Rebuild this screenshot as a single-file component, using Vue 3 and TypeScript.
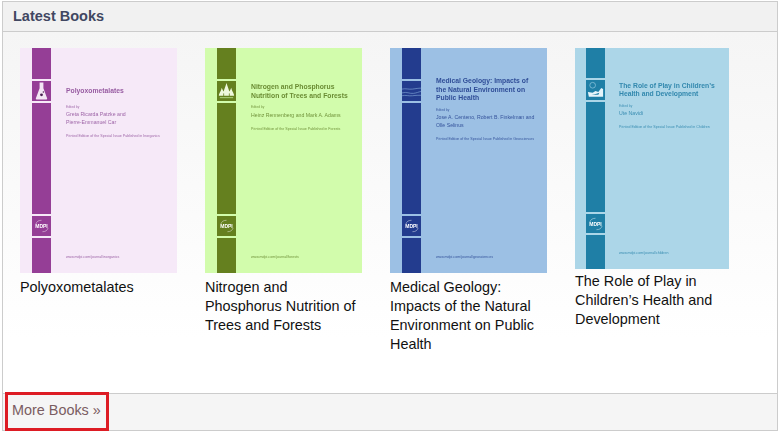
<script setup lang="ts">
interface Book {
  name: string
  title: string[]
  editors: string[]
  journal: string
  url: string
  kind: 'flask' | 'trees' | 'waves' | 'play'
  paper: string
  strip: string
  ink: string
  top: number
  byGap: number
  small?: boolean
}

const books: Book[] = [
  {
    name: 'Polyoxometalates',
    title: ['Polyoxometalates'],
    editors: ['Greta Ricarda Patzke and', 'Pierre-Emmanuel Car'],
    journal: 'Inorganics',
    url: 'www.mdpi.com/journal/inorganics',
    kind: 'flask',
    paper: '#f6e9f8',
    strip: '#953e96',
    ink: '#8d4c98',
    top: 39,
    byGap: 9,
  },
  {
    name: 'Nitrogen and Phosphorus Nutrition of Trees and Forests',
    title: ['Nitrogen and Phosphorus', 'Nutrition of Trees and Forests'],
    editors: ['Heinz Rennenberg and Mark A. Adams'],
    journal: 'Forests',
    url: 'www.mdpi.com/journal/forests',
    kind: 'trees',
    paper: '#d2fcac',
    strip: '#65801f',
    ink: '#5f7f26',
    top: 35,
    byGap: 5,
  },
  {
    name: 'Medical Geology: Impacts of the Natural Environment on Public Health',
    title: ['Medical Geology: Impacts of', 'the Natural Environment on', 'Public Health'],
    editors: ['Jose A. Centeno, Robert B. Finkelman and', 'Olle Selinus'],
    journal: 'Geosciences',
    url: 'www.mdpi.com/journal/geosciences',
    kind: 'waves',
    paper: '#9cc0e4',
    strip: '#233c8e',
    ink: '#24418f',
    top: 29,
    byGap: 5,
  },
  {
    name: 'The Role of Play in Children\u2019s Health and Development',
    title: ['The Role of Play in Children\u2019s', 'Health and Development'],
    editors: ['Ute Navidi'],
    journal: 'Children',
    url: 'www.mdpi.com/journal/children',
    kind: 'play',
    paper: '#acd6e8',
    strip: '#1f7fa6',
    ink: '#2680a8',
    top: 33.5,
    byGap: 5,
    small: true,
  },
]
</script>

<template>
  <section class="panel">
    <header class="panel-head">Latest Books</header>

    <div class="panel-body">
      <article v-for="book in books" :key="book.name" class="book">
        <div
          class="cover"
          :class="{ small: book.small }"
          :style="{ backgroundColor: book.paper, color: book.ink }"
        >
          <div class="strip" :style="{ '--strip': book.strip }">
            <div class="seg seg-top"></div>
            <div class="seg seg-icon">
              <svg v-if="book.kind === 'flask'" viewBox="0 0 20 20" width="19" height="20">
                <path d="M8 1h4v6l4 11a1 1 0 0 1-1 1H5a1 1 0 0 1-1-1l4-11z" fill="#f3e6f4" />
                <circle cx="10" cy="14" r="1.5" fill="#4a2050" />
                <circle cx="12" cy="11" r="0.8" fill="#4a2050" />
              </svg>
              <svg v-else-if="book.kind === 'trees'" viewBox="0 0 20 20" width="19" height="20">
                <path d="M2 15C2 12 4 11 5 6.500 6 9 6.500 10 7 10.500 8 7 9 5 10 1.500 11 5 12 7 13 10.500 13.500 10 14 9 15 6.500 16 11 18 12 18 15z" fill="#eef8dc" />
                <path d="M7 15.500v-3M13 15.500v-3" stroke="#65801f" stroke-width="0.8" />
                <path d="M3 17h14" stroke="#d2fcac" stroke-width="0.7" />
              </svg>
              <svg v-else-if="book.kind === 'waves'" viewBox="0 0 20 20" width="19" height="20" fill="none" stroke="#7fa3d4" stroke-width="0.7">
                <path d="M0 8c4-1 7 .5 11 0s6-1 9-1" />
                <path d="M0 12c5-1.500 8 1 12 .5s5-1.500 8-2" />
                <path d="M0 15c4-1 7 .5 11 0s6-.5 9-.5" />
              </svg>
              <svg v-else viewBox="0 0 20 20" width="19" height="20">
                <circle cx="7" cy="5" r="3" fill="none" stroke="#8cc5dc" stroke-width="0.8" />
                <path d="M2 12l5 1 3-2 3 1 3-4 2 1v8H3z" fill="#e6f4fa" />
                <path d="M6 15h7l1-2-3 1-2 .5z" fill="#1f7fa6" />
              </svg>
            </div>
            <div class="seg seg-fill"></div>
            <div class="seg seg-logo">
              <span class="logo-text">MDPI</span>
              <svg class="logo-arc" viewBox="0 0 20 20" width="19" height="20" fill="none" stroke="#fff" stroke-width="0.6" opacity="0.75">
                <path d="M4 8c1-3 3-4 6-4" />
                <path d="M17 12c-1 3-3 4-6 4" />
              </svg>
            </div>
            <div class="seg seg-end"></div>
          </div>

          <div class="print" :style="{ paddingTop: book.top + 'px' }">
            <div class="print-title">
              <div v-for="line in book.title" :key="line">{{ line }}</div>
            </div>
            <div class="print-by" :style="{ marginTop: book.byGap + 'px' }">Edited by</div>
            <div class="print-names">
              <div v-for="line in book.editors" :key="line">{{ line }}</div>
            </div>
            <div class="print-note">Printed Edition of the Special Issue Published in {{ book.journal }}</div>
            <div class="print-url">{{ book.url }}</div>
          </div>
        </div>
        <h3 class="book-name">{{ book.name }}</h3>
      </article>
    </div>

    <footer class="panel-foot">
      <a class="more" href="#">More Books »</a>
      <span class="mark"></span>
    </footer>
  </section>
</template>

<style>
html,
body {
  background: #fff;
}
</style>

<style scoped>
.panel {
  box-sizing: border-box;
  width: 776px;
  height: 430px;
  margin: 1px 0 0 2px;
  display: flex;
  flex-direction: column;
  border: 1px solid #ccc;
  font-family: "Liberation Sans", Arial, sans-serif;
}

.panel-head {
  height: 29px;
  padding-left: 10px;
  background: #f1f1f1;
  border-bottom: 1px solid #ccc;
  color: #414761;
  font-size: 14.5px;
  font-weight: bold;
  line-height: 28px;
}

.panel-body {
  flex: 1;
  display: flex;
  align-items: flex-start;
  gap: 28px;
  padding: 16px 0 0 17px;
  background: linear-gradient(#f5f5f5, #fff 85%);
}

.book {
  width: 157px;
}

.cover {
  width: 157px;
  height: 225px;
  display: flex;
  padding-left: 12px;
  box-sizing: border-box;
}

.cover.small {
  width: 154px;
  height: 221px;
  padding-left: 11px;
}

.small .print {
  padding-left: 14px;
}

.strip {
  width: 19px;
  flex: none;
  display: flex;
  flex-direction: column;
  gap: 2px;
}

.seg {
  background: var(--strip);
  position: relative;
  flex: none;
}

.seg-top {
  height: 31px;
}

.seg-icon,
.seg-logo {
  height: 20px;
  overflow: hidden;
}

.seg-icon svg,
.seg-logo svg {
  display: block;
  filter: blur(0.3px);
}

.seg-fill {
  flex: 1;
}

.seg-end {
  height: 35px;
}

.small .seg-top {
  height: 30px;
}

.small .seg-logo {
  height: 19px;
}

.small .seg-end {
  height: 34px;
}

.logo-text {
  position: absolute;
  inset: 0;
  color: #fff;
  font-size: 5px;
  font-weight: bold;
  line-height: 20px;
  text-align: center;
  filter: blur(0.3px);
}

.logo-arc {
  position: absolute;
  inset: 0;
}

.print {
  flex: 1;
  display: flex;
  flex-direction: column;
  padding-left: 15px;
  padding-bottom: 13px;
  box-sizing: border-box;
  white-space: nowrap;
  filter: blur(0.45px);
}

.print-title {
  font-size: 6.8px;
  font-weight: bold;
  line-height: 8.5px;
  opacity: 0.9;
}

.print-by {
  font-size: 3.2px;
  line-height: 5px;
  opacity: 0.8;
}

.print-names {
  margin-top: 0.5px;
  font-size: 5.2px;
  line-height: 8px;
  opacity: 0.85;
}

.print-note {
  margin-top: 8px;
  font-size: 3.6px;
  line-height: 5px;
  opacity: 0.85;
}

.print-url {
  margin-top: auto;
  font-size: 3.6px;
  line-height: 5px;
  opacity: 0.85;
}

.book-name {
  margin: 5px 0 0;
  color: #111;
  font-size: 14.4px;
  font-weight: normal;
  line-height: 19px;
}

.small + .book-name {
  margin-top: 3px;
}

.panel-foot {
  position: relative;
  height: 37px;
  box-sizing: border-box;
  padding-left: 9px;
  background: #f5f5f5;
  border-top: 1px solid #ccc;
  line-height: 32px;
}

.more {
  color: #7a5c61;
  font-size: 14.4px;
  text-decoration: none;
}

.mark {
  position: absolute;
  left: 2px;
  top: -2px;
  width: 104px;
  height: 39px;
  box-sizing: border-box;
  border: 3px solid #dd1c24;
}
</style>
